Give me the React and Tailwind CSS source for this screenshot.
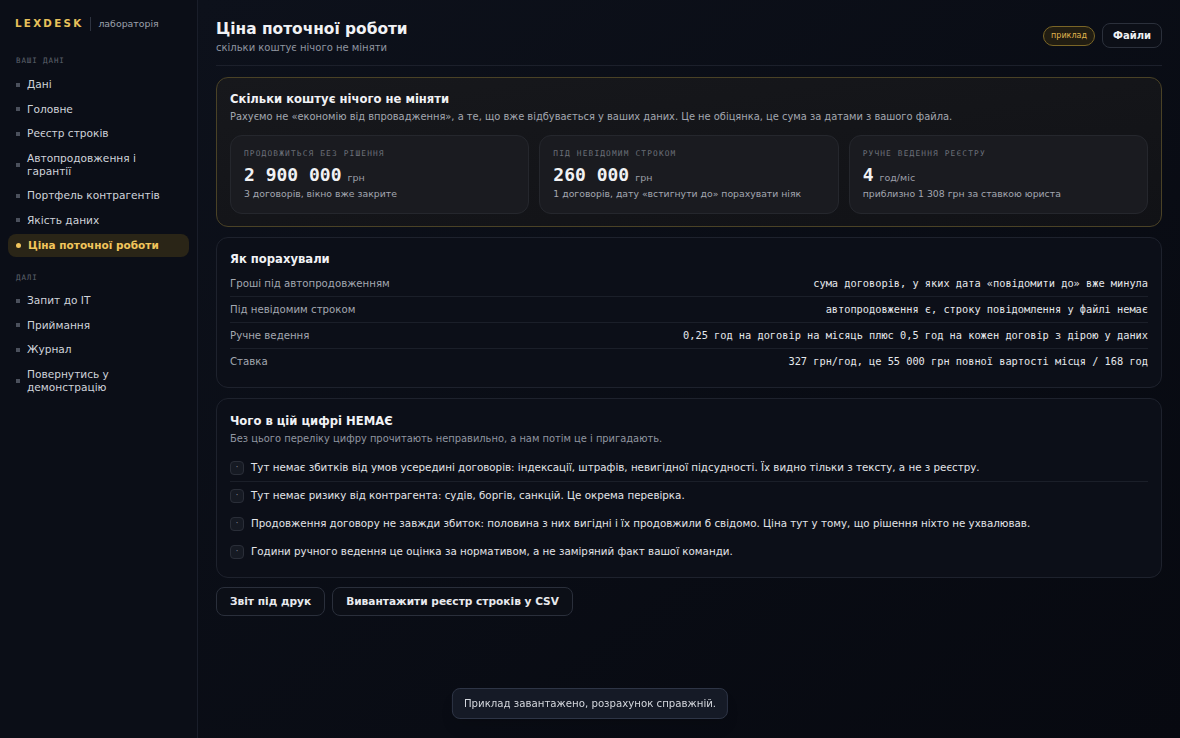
const sans = { fontFamily: '"DejaVu Sans", "Noto Sans", sans-serif' };
const mono = { fontFamily: '"DejaVu Sans Mono", monospace' };

const navTop = [
  "Дані",
  "Головне",
  "Реєстр строків",
  "Автопродовження і гарантії",
  "Портфель контрагентів",
  "Якість даних",
];
const navBottom = ["Запит до ІТ", "Приймання", "Журнал", "Повернутись у демонстрацію"];

const stats = [
  {
    label: "Продовжиться без рішення",
    value: "2 900 000",
    unit: "грн",
    note: "3 договорів, вікно вже закрите",
  },
  {
    label: "Під невідомим строком",
    value: "260 000",
    unit: "грн",
    note: "1 договорів, дату «встигнути до» порахувати ніяк",
  },
  {
    label: "Ручне ведення реєстру",
    value: "4",
    unit: "год/міс",
    note: "приблизно 1 308 грн за ставкою юриста",
  },
];

const rows = [
  ["Гроші під автопродовженням", "сума договорів, у яких дата «повідомити до» вже минула"],
  ["Під невідомим строком", "автопродовження є, строку повідомлення у файлі немає"],
  ["Ручне ведення", "0,25 год на договір на місяць плюс 0,5 год на кожен договір з дірою у даних"],
  ["Ставка", "327 грн/год, це 55 000 грн повної вартості місця / 168 год"],
];

const missing = [
  "Тут немає збитків від умов усередині договорів: індексації, штрафів, невигідної підсудності. Їх видно тільки з тексту, а не з реєстру.",
  "Тут немає ризику від контрагента: судів, боргів, санкцій. Це окрема перевірка.",
  "Продовження договору не завжди збиток: половина з них вигідні і їх продовжили б свідомо. Ціна тут у тому, що рішення ніхто не ухвалював.",
  "Години ручного ведення це оцінка за нормативом, а не заміряний факт вашої команди.",
];

function NavItem({ label, active }) {
  if (active) {
    return (
      <div className="flex items-center gap-[7px] rounded-lg bg-[#2a2517] px-[8px] py-[5px] text-[10.5px] font-bold leading-[13px] text-[#f2c55c]">
        <span className="h-[5px] w-[5px] rounded-full bg-[#f2c55c]" />
        <span>{label}</span>
      </div>
    );
  }
  return (
    <div className="flex items-center gap-[7px] px-[8px] py-[4px] text-[10.6px] leading-[13px] text-[#cfd3da]">
      <span className="h-[4px] w-[4px] shrink-0 bg-[#4b505c]" />
      <span>{label}</span>
    </div>
  );
}

function Sidebar() {
  return (
    <aside className="flex w-[198px] shrink-0 flex-col border-r border-[#1a1e2a] bg-[#0b0e17] px-[8px] pt-[17px]">
      <div className="flex h-[14px] items-center gap-[7px] px-[7px]">
        <span className="text-[10.3px] font-bold tracking-[0.22em] text-[#e8c15a]">LEXDESK</span>
        <span className="h-[14px] w-px bg-[#2e3340]" />
        <span className="text-[9.4px] text-[#9ca1ab]">лабораторія</span>
      </div>
      <div className="mt-[25px] px-[8px] text-[7.5px] leading-[10px] tracking-[0.12em] text-[#5d626d]" style={mono}>
        ВАШІ ДАНІ
      </div>
      <div className="mt-[8px] flex flex-col gap-[3.5px]">
        {navTop.map((n) => (
          <NavItem key={n} label={n} />
        ))}
        <NavItem label="Ціна поточної роботи" active />
      </div>
      <div className="mt-[16px] px-[8px] text-[7.5px] leading-[10px] tracking-[0.12em] text-[#5d626d]" style={mono}>
        ДАЛІ
      </div>
      <div className="mt-[7px] flex flex-col gap-[3.5px]">
        {navBottom.map((n) => (
          <NavItem key={n} label={n} />
        ))}
      </div>
    </aside>
  );
}

function StatCard({ s }) {
  return (
    <div className="flex flex-col rounded-[12px] border border-[#25272d] bg-[#1a1b20] px-[13px] pt-[13px] pb-[13px]">
      <div className="text-[7.8px] uppercase leading-[10px] tracking-[0.15em] text-[#6b6f78]" style={mono}>
        {s.label}
      </div>
      <div className="mt-[5px] flex items-baseline gap-[6px]">
        <span className="text-[18px] font-bold leading-[22px] text-[#f1f2f4]" style={mono}>
          {s.value}
        </span>
        <span className="text-[9.5px] text-[#9a9ea7]">{s.unit}</span>
      </div>
      <div className="mt-[2px] text-[9.3px] leading-[12px] text-[#a3a7b0]">{s.note}</div>
    </div>
  );
}

export default function App() {
  return (
    <div className="flex h-[738px] w-full overflow-hidden bg-[#090c14] text-white" style={sans}>
      <Sidebar />
      <main className="flex min-w-0 flex-1 flex-col bg-gradient-to-br from-[#0d111b] to-[#070910] px-[18px]">
        <header className="flex items-start justify-between border-b border-[#1c202b] pt-[19px] pb-[11px]">
          <div>
            <h1 className="text-[15.4px] font-bold leading-[20px] text-[#f1f2f5]">Ціна поточної роботи</h1>
            <div className="mt-[3px] text-[10px] leading-[12px] text-[#9096a1]">скільки коштує нічого не міняти</div>
          </div>
          <div className="mt-[4px] flex items-center gap-[7px]">
            <span className="rounded-full border border-[#7a6526] bg-[#211d12] px-[7px] py-[3px] text-[8px] leading-[12px] text-[#e0b54f]">
              приклад
            </span>
            <button className="rounded-lg border border-[#2b303b] bg-[#0c0f17] px-[10px] py-[5px] text-[10px] font-bold leading-[13px] text-[#eef0f3]">
              Файли
            </button>
          </div>
        </header>

        <section className="mt-[11px] rounded-[12px] border border-[#4a4226] bg-gradient-to-br from-[#17181c] to-[#111216] px-[13px] pt-[14px] pb-[12px]">
          <h2 className="text-[11.6px] font-bold leading-[14px] text-[#f1f2f5]">Скільки коштує нічого не міняти</h2>
          <p className="mt-[4px] text-[9.9px] leading-[13px] text-[#a3a7b0]">
            Рахуємо не «економію від впровадження», а те, що вже відбувається у ваших даних. Це не обіцянка, це сума за датами з вашого файла.
          </p>
          <div className="mt-[12px] grid grid-cols-3 gap-[10px]">
            {stats.map((s) => (
              <StatCard key={s.label} s={s} />
            ))}
          </div>
        </section>

        <section className="mt-[10px] rounded-[12px] border border-[#1e222d] bg-[#0c0f18] px-[13px] pt-[14px] pb-[12px]">
          <h2 className="text-[11.6px] font-bold leading-[14px] text-[#f1f2f5]">Як порахували</h2>
          <div className="mt-[5px] flex flex-col">
            {rows.map(([k, v], i) => (
              <div
                key={k}
                className={`flex h-[26px] items-center justify-between ${i < rows.length - 1 ? "border-b border-[#1b1f29]" : ""}`}
              >
                <span className="text-[10.2px] text-[#a3a7b0]">{k}</span>
                <span className="text-[10.3px] text-[#e5e7eb]" style={mono}>
                  {v}
                </span>
              </div>
            ))}
          </div>
        </section>

        <section className="mt-[10px] rounded-[12px] border border-[#1e222d] bg-[#0c0f18] px-[13px] pt-[15px] pb-[11px]">
          <h2 className="text-[11.6px] font-bold leading-[14px] text-[#f1f2f5]">Чого в цій цифрі НЕМАЄ</h2>
          <p className="mt-[5px] text-[9.9px] leading-[12px] text-[#9096a1]">
            Без цього переліку цифру прочитають неправильно, а нам потім це і пригадають.
          </p>
          <div className="mt-[9px] flex flex-col">
            {missing.map((m, i) => (
              <div key={i} className={`flex h-[28px] items-center gap-[7px] ${i === 0 ? "border-b border-[#1b1f29]" : ""}`}>
                <span className="flex h-[14px] w-[14px] shrink-0 items-center justify-center rounded-[4px] border border-[#2a2e38] bg-[#161a23] text-[8px] leading-none text-[#8a8f99]">
                  ·
                </span>
                <span className="text-[10.3px] text-[#e3e5e9]">{m}</span>
              </div>
            ))}
          </div>
        </section>

        <div className="mt-[9px] flex gap-[7px]">
          <button className="h-[29px] rounded-lg border border-[#2a2f3b] bg-[#0c0f17] px-[13px] text-[10.6px] font-bold text-[#e8eaee]">
            Звіт під друк
          </button>
          <button className="h-[29px] rounded-lg border border-[#2a2f3b] bg-[#0c0f17] px-[13px] text-[10.6px] font-bold text-[#e8eaee]">
            Вивантажити реєстр строків у CSV
          </button>
        </div>
      </main>

      <div className="fixed bottom-[19px] left-1/2 -translate-x-1/2 rounded-lg border border-[#2e3546] bg-[#151a26] px-[11px] py-[8px] text-[10.2px] leading-[13px] text-[#d4d7dd] shadow-lg">
        Приклад завантажено, розрахунок справжній.
      </div>
    </div>
  );
}
